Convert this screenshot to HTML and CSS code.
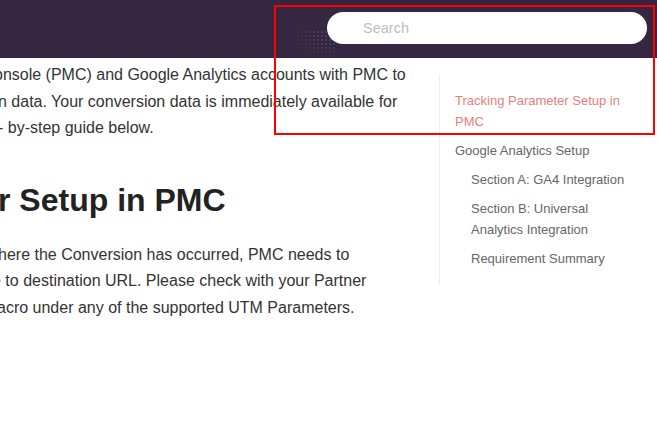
FILE: index.html
```html
<!DOCTYPE html>
<html lang="en">
<head>
<meta charset="utf-8">
<title>PMC Google Analytics Setup</title>
<link rel="stylesheet" href="styles.css">
</head>
<body>
<header class="topbar">
  <input class="search" type="text" placeholder="Search">
</header>
<main class="page">
  <article class="content">
    <p class="intro">
      <span class="ln l1">onsole (PMC) and Google Analytics accounts with PMC to</span>
      <span class="ln l2">n data. Your conversion data is immediately available for</span>
      <span class="ln l3">- by-step guide below.</span>
    </p>
    <h1 class="title">r Setup in PMC</h1>
    <p class="body">
      <span class="ln l4">here the Conversion has occurred, PMC needs to</span>
      <span class="ln l5">e to destination URL. Please check with your Partner</span>
      <span class="ln l6">acro under any of the supported UTM Parameters.</span>
    </p>
  </article>
  <aside class="toc">
    <ul class="toc-list">
      <li class="toc-item active">Tracking Parameter Setup in PMC</li>
      <li class="toc-item">Google Analytics Setup</li>
      <li class="toc-item sub">Section A: GA4 Integration</li>
      <li class="toc-item sub">Section B: Universal Analytics Integration</li>
      <li class="toc-item sub">Requirement Summary</li>
    </ul>
  </aside>
</main>
<div class="annotation"></div>
</body>
</html>
```
FILE: styles.css
```css
html, body {
  margin: 0;
  padding: 0;
  background: #ffffff;
  font-family: "Liberation Sans", Arial, sans-serif;
  overflow: hidden;
  width: 657px;
  height: 434px;
}

.topbar {
  position: relative;
  height: 58px;
  background: #352641;
  display: flex;
  justify-content: flex-end;
  align-items: flex-start;
  padding: 12px 10px 0 0;
  box-sizing: border-box;
}

.topbar::before {
  content: "";
  position: absolute;
  left: 292px;
  top: 30px;
  width: 44px;
  height: 28px;
  background-image: radial-gradient(circle, rgba(110, 92, 130, 0.6) 0.6px, transparent 1px);
  background-size: 4px 4px;
  -webkit-mask-image: radial-gradient(ellipse at 100% 20%, #000 25%, transparent 75%);
  mask-image: radial-gradient(ellipse at 100% 20%, #000 25%, transparent 75%);
  pointer-events: none;
}

.search {
  position: relative;
  width: 320px;
  height: 32px;
  border: none;
  border-radius: 16px;
  background: #ffffff;
  padding: 0 0 0 36px;
  box-sizing: border-box;
  font-family: "Liberation Sans", Arial, sans-serif;
  font-size: 14.5px;
  color: #333;
  outline: none;
}

.search::placeholder {
  color: #bdbdbd;
}

.page {
  display: flex;
  align-items: flex-start;
}

.content {
  width: 439px;
  flex: none;
  overflow: hidden;
  padding-top: 4px;
  color: #333333;
}

.intro, .body {
  margin: 0;
  font-size: 16px;
  line-height: 26.5px;
}

.ln {
  display: block;
  white-space: nowrap;
}

.l1 { margin-left: -6px; }
.l2 { margin-left: -2px; }
.l3 { margin-left: -2px; }
.l4 { margin-left: -2px; }
.l5 { margin-left: -8px; }
.l6 { margin-left: -3px; }

.title {
  margin: 39px 0 23px -2px;
  font-size: 32px;
  line-height: 38px;
  font-weight: bold;
  color: #222222;
  white-space: nowrap;
}

.toc {
  flex: 1;
  margin-top: 16px;
  border-left: 1px solid #eeeeee;
  padding: 16px 16px 8px 15px;
}

.toc-list {
  list-style: none;
  margin: 0;
  padding: 0;
}

.toc-item {
  font-size: 13px;
  line-height: 21px;
  color: #666666;
  margin-bottom: 8px;
}

.toc-item.active {
  color: #e57f7c;
}

.toc-item.sub {
  padding-left: 16px;
}

.annotation {
  position: absolute;
  left: 274px;
  top: 5px;
  width: 381px;
  height: 130px;
  border: 2px solid #ff0000;
  box-sizing: border-box;
  pointer-events: none;
}
```
